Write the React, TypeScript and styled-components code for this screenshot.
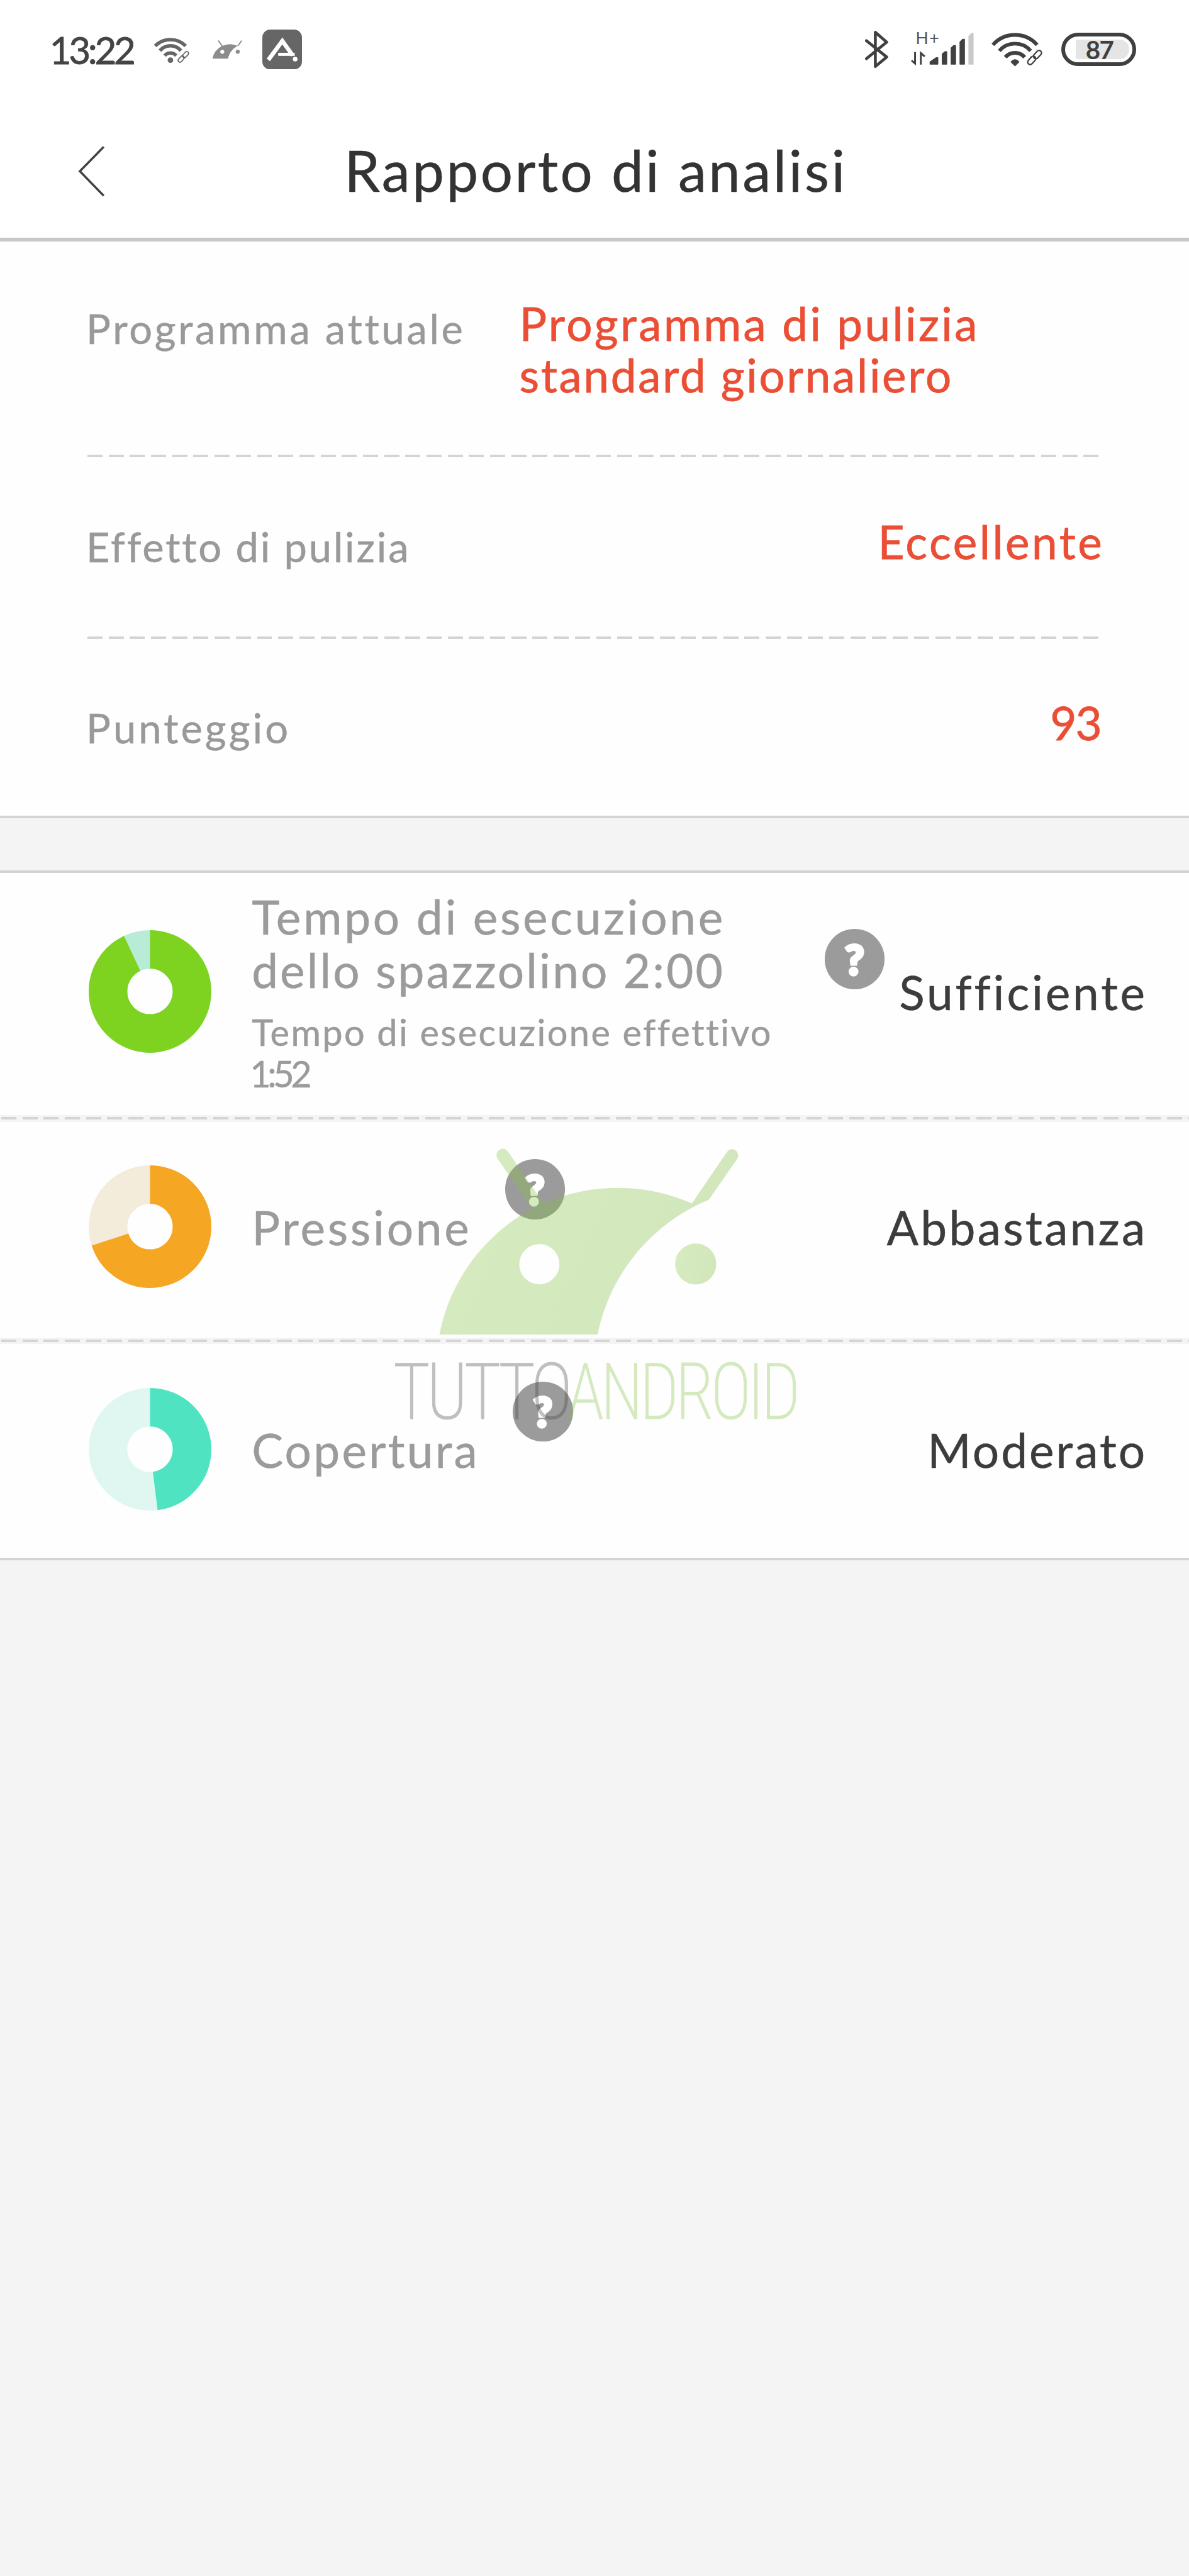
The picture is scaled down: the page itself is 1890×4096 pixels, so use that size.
import React from "react";
import styled, { createGlobalStyle } from "styled-components";

/* All sizes are given on a 1920-wide artboard and scaled to the 1890-wide screen. */
const SCALE = 1890 / 1920;
const u = (n: number) => `${Number((n * SCALE).toFixed(2))}px`;

const GlobalStyle = createGlobalStyle`
  html, body {
    margin: 0;
    background: #f4f4f4;
  }
  body {
    font-family: Lato, "Noto Sans", sans-serif;
    -webkit-font-smoothing: antialiased;
  }
`;

const Screen = styled.main`
  width: ${u(1920)};
  min-height: ${u(4160)};
  background: #f4f4f4;
  overflow: hidden;
`;

/* ---------- status bar ---------- */

const StatusBar = styled.header`
  display: flex;
  align-items: center;
  justify-content: space-between;
  box-sizing: border-box;
  height: ${u(170)};
  padding: 0 ${u(85.3)} ${u(10)} ${u(80)};
  background: #fff;
`;

const StatusGroup = styled.div`
  display: flex;
  align-items: center;
`;

const Clock = styled.span`
  width: ${u(168.3)};
  font-size: ${u(61)};
  line-height: 1;
  letter-spacing: ${u(-4.4)};
  color: #444;
  -webkit-text-stroke: 0.8px #444;
  white-space: nowrap;
`;

const Glyph = styled.svg<{ $w: number; $h: number; $gap?: number; $lift?: number }>`
  display: block;
  flex: none;
  width: ${(p) => u(p.$w)};
  height: ${(p) => u(p.$h)};
  margin-left: ${(p) => u(p.$gap ?? 0)};
  margin-bottom: ${(p) => u(p.$lift ?? 0)};
`;

const Battery = styled.div`
  display: flex;
  box-sizing: border-box;
  width: ${u(120.7)};
  height: ${u(54)};
  margin-left: ${u(29.3)};
  padding: ${u(5)} ${u(5)} ${u(5)} ${u(17)};
  border: 6px solid #404040;
  border-radius: ${u(27)};
`;

const BatteryLevel = styled.div`
  display: flex;
  align-items: center;
  justify-content: center;
  box-sizing: border-box;
  width: ${u(87)};
  padding-right: ${u(10)};
  border-radius: ${u(3)} ${u(17)} ${u(17)} ${u(3)};
  background: #e5e5e5;
  color: #404040;
  font-size: ${u(41)};
  font-weight: 700;
  line-height: 1;
  letter-spacing: ${u(-1.5)};
`;

/* ---------- navigation bar ---------- */

const NavBar = styled.nav`
  display: grid;
  grid-template-columns: 1fr auto 1fr;
  align-items: center;
  height: ${u(214)};
  border-bottom: 6px solid #c8c8c8;
  background: #fff;
`;

const BackButton = styled.button`
  display: flex;
  width: ${u(190)};
  padding: 0 0 0 ${u(126)};
  border: 0;
  background: none;
`;

const Title = styled.h1`
  margin: 0 ${u(-4)} ${u(4)} 0;
  font-size: ${u(92)};
  font-weight: 400;
  line-height: 1.2;
  letter-spacing: ${u(3.5)};
  color: #333;
  -webkit-text-stroke: 0.5px #333;
  white-space: nowrap;
`;

/* ---------- summary ---------- */

const Summary = styled.section`
  padding: 0 ${u(141.5)} 0 ${u(141.7)};
  border-bottom: 4px solid #d4d4d4;
  background: #fefefe;
`;

const SummaryRow = styled.div<{ $height: number; $top: number }>`
  display: flex;
  justify-content: space-between;
  box-sizing: border-box;
  height: ${(p) => u(p.$height)};
  padding-top: ${(p) => u(p.$top)};
  line-height: ${u(83.5)};
`;

const Label = styled.span<{ $tracking: number }>`
  margin: ${u(8.2)} 0 0 ${u(-2.5)};
  font-size: ${u(66)};
  letter-spacing: ${(p) => u(p.$tracking)};
  color: #999;
  -webkit-text-stroke: 0.5px #999;
  white-space: nowrap;
`;

const Value = styled.span<{ $tracking?: number; $wide?: boolean }>`
  width: ${(p) => (p.$wide ? u(941) : "auto")};
  margin-right: ${(p) => u(-(p.$tracking ?? 0) - 1)};
  font-size: ${u(74)};
  letter-spacing: ${(p) => u(p.$tracking ?? 0)};
  color: #ea4f36;
  -webkit-text-stroke: 0.8px #ea4f36;
  white-space: nowrap;
`;

const ValueLine = styled.span<{ $tracking: number }>`
  display: block;
  letter-spacing: ${(p) => u(p.$tracking)};
`;

const dashes = (offset: number) =>
  `repeating-linear-gradient(90deg, #d4d4d4 0 ${u(24.3)}, transparent ${u(24.3)} ${u(34.22)}) ${u(offset)} 50%`;

const Divider = styled.div`
  height: 4px;
  background: ${dashes(0)};
`;

/* ---------- metrics ---------- */

const Metrics = styled.section`
  position: relative;
  margin-top: ${u(85)};
  border-top: 4px solid #d4d4d4;
  border-bottom: 4px solid #d4d4d4;
  background: #fefefe;
`;

const MetricRow = styled.article<{ $body: number; $foot: number }>`
  display: flex;
  align-items: center;
  height: ${(p) => u(p.$body)};
  padding: 0 ${u(71)} ${(p) => u(p.$foot)} ${u(143.5)};
`;

const MetricDivider = styled.div`
  display: flex;
  align-items: center;
  height: ${u(10.6)};
  padding-left: ${u(2)};
  background: #f4f4f4;

  &::before {
    content: "";
    flex: 1;
    height: 4px;
    background: ${dashes(0)};
  }
`;

const MetricText = styled.div<{ $width?: number }>`
  width: ${(p) => (p.$width ? u(p.$width) : "auto")};
  margin-left: ${u(65)};
  padding-top: ${u(3)};
  color: #9b9b9b;
  -webkit-text-stroke: 0.5px #9b9b9b;
  white-space: nowrap;
`;

const Name = styled.div<{ $tracking: number }>`
  font-size: ${u(76)};
  line-height: ${u(87)};
  letter-spacing: ${(p) => u(p.$tracking)};
`;

const Note = styled.div`
  padding-top: ${u(22)};
  font-size: ${u(58.6)};
  line-height: ${u(67.7)};
  letter-spacing: ${u(2.45)};
`;

const NoteTime = styled.span`
  display: block;
  margin-left: ${u(-3)};
  letter-spacing: ${u(-5.5)};
`;

const Help = styled.button<{ $lift: number }>`
  display: flex;
  flex: none;
  align-items: center;
  justify-content: center;
  width: ${u(97)};
  height: ${u(97)};
  margin: 0 0 ${(p) => u(p.$lift)} ${u(54)};
  padding: 0;
  border: 0;
  border-radius: 50%;
  background: #9b9b9b;
  color: #fff;
  font: 900 ${u(66)} / 1 Lato, sans-serif;
  -webkit-text-stroke: 5px #fff;
`;

const Verdict = styled.span<{ $tracking: number }>`
  margin: 0 ${(p) => u(-p.$tracking)} 0 auto;
  padding-top: ${u(3)};
  font-size: ${u(76)};
  line-height: ${u(87)};
  letter-spacing: ${(p) => u(p.$tracking)};
  color: #3c3c3c;
  -webkit-text-stroke: 0.5px #3c3c3c;
  white-space: nowrap;
`;

const Watermark = styled.svg`
  position: absolute;
  top: ${u(430)};
  left: ${u(630)};
  width: ${u(670)};
  height: ${u(490)};
  opacity: 0.33;
  pointer-events: none;
`;

/* ---------- drawings ---------- */

const AndroidHead = ({ fill }: { fill: string }) => (
  <g fill={fill}>
    <path
      fillRule="evenodd"
      d="M709.7 2155 A296 296 0 0 1 859.4 1951.4 L803.4 1870.5 A10 10 0 0 1 820.5 1859.5 L877.8 1943.2 A296 296 0 0 1 1117.4 1943.2 L1174 1860 A10 10 0 0 1 1191 1870.5 L1145 1937.1 A300 300 0 0 0 965 2155 Z M903.6 2041.3 A32.5 32.5 0 1 0 838.6 2041.3 A32.5 32.5 0 1 0 903.6 2041.3 Z"
    />
    <circle cx="1123.6" cy="2041" r="33.2" />
  </g>
);

const Chain = () => (
  <g fill="none" strokeWidth="7">
    <rect x="-23" y="-12" width="46" height="24" rx="12" transform="translate(55 27) rotate(-48)" />
    <rect x="-23" y="-12" width="46" height="24" rx="12" transform="translate(27 55) rotate(-48)" />
  </g>
);

const Donut = ({ value, color, rest }: { value: number; color: string; rest: string }) => (
  <Glyph $w={198} $h={198} viewBox="0 0 198 198">
    <g fill="none" strokeWidth="62.3" transform="rotate(-90 99 99)">
      <circle cx="99" cy="99" r="67.85" stroke={rest} />
      <circle cx="99" cy="99" r="67.85" stroke={color} pathLength="100" strokeDasharray={`${value} 100`} />
    </g>
  </Glyph>
);

export default function App() {
  return (
    <Screen>
      <GlobalStyle />

      <StatusBar>
        <StatusGroup>
          <Clock>13:22</Clock>
          <Glyph $w={60} $h={45} viewBox="563 82 180 135">
            <g fill="none" stroke="#666" strokeWidth="17">
              <path d="M571 131 A104 104 0 0 1 719 131" />
              <path d="M594 154 A66 66 0 0 1 696 154" />
              <path d="M617 178 A37 37 0 0 1 673 178" />
            </g>
            <circle cx="645" cy="200" r="13.5" fill="#666" />
            <g transform="translate(677 153) scale(0.75)" stroke="#666">
              <Chain />
            </g>
          </Glyph>
          <Glyph $w={49} $h={30} $gap={34} viewBox="706 1853 490 304">
            <AndroidHead fill="#8c8c8c" />
          </Glyph>
          <Glyph $w={64} $h={64.4} $gap={32} viewBox="1089 53 192 193">
            <rect x="1089" y="53" width="192" height="193" rx="38" fill="#666" />
            <g fill="none" stroke="#fff" strokeWidth="20">
              <path d="M1118 200 L1186 108 L1236 178" strokeLinejoin="miter" />
              <path d="M1166 173 H1246" strokeWidth="15" />
            </g>
            <circle cx="1248" cy="196" r="11.5" fill="#fff" />
          </Glyph>
        </StatusGroup>

        <StatusGroup>
          <Glyph $w={38} $h={62} viewBox="53 57 114 186">
            <path
              d="M60 108 L158 187 L103 233 V67 L158 115 L60 195"
              fill="none"
              stroke="#404040"
              strokeWidth="14"
              strokeLinecap="round"
              strokeLinejoin="round"
            />
          </Glyph>
          <Glyph $w={102} $h={66} $gap={36} $lift={14} viewBox="276 29 306 198">
            <text x="299" y="122" fontFamily="Lato" fontWeight="400" fontSize="81" letterSpacing="4" fill="#555">
              H+
            </text>
            <g fill="none" stroke="#404040" strokeWidth="9">
              <path d="M296 162 V218 L279 203" />
              <path d="M324 223 V167 L343 184" />
            </g>
            <g fill="#404040" stroke="#404040" strokeWidth="5" strokeLinejoin="round">
              <path d="M369 221 V210 L398 190 H406 V221 Z" />
              <path d="M428 221 V172 L441 161 H449 V221 Z" />
              <path d="M471 221 V143 L484 131 H492 V221 Z" />
              <path d="M514 221 V114 L527 101 H535 V221 Z" />
            </g>
            <path
              d="M557 221 V86 L570 73 H577 V221 Z"
              fill="#c9c9c9"
              stroke="#c9c9c9"
              strokeWidth="5"
              strokeLinejoin="round"
            />
          </Glyph>
          <Glyph $w={84} $h={56} $gap={28} viewBox="664 66 252 168">
            <g fill="none" stroke="#404040" strokeWidth="18">
              <path d="M671 128 A143 143 0 0 1 885 128" />
              <path d="M702 157 A100 100 0 0 1 854 157" />
              <path d="M731 188 A62 62 0 0 1 825 188" />
            </g>
            <path d="M756 211 Q778 185 800 211 L778 232 Z" fill="#404040" />
            <g transform="translate(832 148)" stroke="#404040">
              <Chain />
            </g>
          </Glyph>
          <Battery>
            <BatteryLevel>87</BatteryLevel>
          </Battery>
        </StatusGroup>
      </StatusBar>

      <NavBar>
        <BackButton aria-label="Indietro">
          <Glyph $w={44} $h={82} viewBox="0 0 44 82">
            <path d="M41.5 1.5 L3 41 L41.5 80.5" fill="none" stroke="#444" strokeWidth="3.6" />
          </Glyph>
        </BackButton>
        <Title>Rapporto di analisi</Title>
      </NavBar>

      <Summary>
        <SummaryRow $height={344} $top={90.5}>
          <Label $tracking={3.8}>Programma attuale</Label>
          <Value $wide>
            <ValueLine $tracking={3.45}>Programma di pulizia</ValueLine>
            <ValueLine $tracking={2.75}>standard giornaliero</ValueLine>
          </Value>
        </SummaryRow>
        <Divider />
        <SummaryRow $height={289.5} $top={94.5}>
          <Label $tracking={2.9}>Effetto di pulizia</Label>
          <Value $tracking={3.6}>Eccellente</Value>
        </SummaryRow>
        <Divider />
        <SummaryRow $height={285.5} $top={94}>
          <Label $tracking={4.2}>Punteggio</Label>
          <Value $tracking={-2}>93</Value>
        </SummaryRow>
      </Summary>

      <Metrics>
        <MetricRow $body={382} $foot={9}>
          <Donut value={93} color="#7ed321" rest="#b8ecd6" />
          <MetricText $width={871}>
            <Name $tracking={3.75}>Tempo di esecuzione</Name>
            <Name $tracking={3.15}>dello spazzolino 2:00</Name>
            <Note>
              Tempo di esecuzione effettivo
              <NoteTime>1:52</NoteTime>
            </Note>
          </MetricText>
          <Help $lift={104}>?</Help>
          <Verdict $tracking={3.9}>Sufficiente</Verdict>
        </MetricRow>
        <MetricDivider />
        <MetricRow $body={339.4} $foot={9}>
          <Donut value={70} color="#f5a623" rest="#f3ecda" />
          <MetricText>
            <Name $tracking={3.8}>Pressione</Name>
          </MetricText>
          <Help $lift={121}>?</Help>
          <Verdict $tracking={3.4}>Abbastanza</Verdict>
        </MetricRow>
        <MetricDivider />
        <MetricRow $body={340} $foot={5}>
          <Donut value={48} color="#50e3c2" rest="#e0f7f1" />
          <MetricText>
            <Name $tracking={3.3}>Copertura</Name>
          </MetricText>
          <Help $lift={121}>?</Help>
          <Verdict $tracking={3.1}>Moderato</Verdict>
        </MetricRow>

        <Watermark viewBox="630 1840 670 490">
          <defs>
            <linearGradient id="leaf" x1="0" y1="0" x2="1" y2="0.3">
              <stop offset="0" stopColor="#8cc548" />
              <stop offset="1" stopColor="#78ba35" />
            </linearGradient>
          </defs>
          <AndroidHead fill="url(#leaf)" />
          <g
            fontFamily="'Roboto Condensed', Roboto, sans-serif"
            fontWeight="200"
            fontSize="125.5"
            letterSpacing="-6"
            strokeWidth="1"
          >
            <text x="635" y="2290.7" textLength="284" lengthAdjust="spacingAndGlyphs" fill="#434343" stroke="#434343">
              TUTTO
            </text>
            <text x="916" y="2290.7" textLength="371" lengthAdjust="spacingAndGlyphs" fill="#84c042" stroke="#84c042">
              ANDROID
            </text>
          </g>
        </Watermark>
      </Metrics>
    </Screen>
  );
}
